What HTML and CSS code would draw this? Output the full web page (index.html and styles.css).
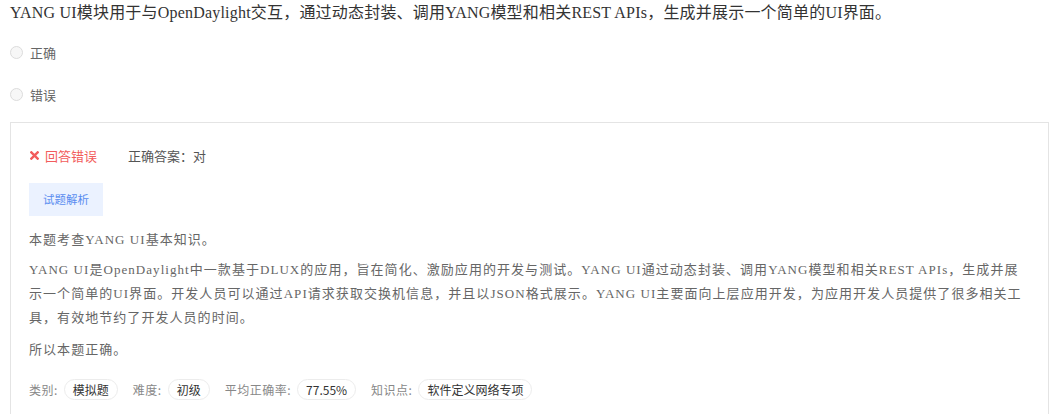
FILE: index.html
```html
<!DOCTYPE html>
<html lang="zh-CN">
<head>
<meta charset="utf-8">
<link rel="stylesheet" href="styles.css">
</head>
<body>
<div class="page">
  <div class="question">YANG UI模块用于与OpenDaylight交互，通过动态封装、调用YANG模型和相关REST APIs，生成并展示一个简单的UI界面。</div>
  <div class="options">
    <label class="option"><span class="radio"></span><span class="opt-text">正确</span></label>
    <label class="option"><span class="radio"></span><span class="opt-text">错误</span></label>
  </div>
  <div class="result-box">
    <div class="result-row">
      <span class="wrong"><svg class="x-icon" viewBox="0 0 10 10" width="9" height="9"><path d="M1.5 1.5 L8.5 8.5 M8.5 1.5 L1.5 8.5" stroke="#f25c5c" stroke-width="2.6" stroke-linecap="square"/></svg>回答错误</span>
      <span class="answer">正确答案：对</span>
    </div>
    <div class="btn-row"><span class="analysis-btn">试题解析</span></div>
    <div class="analysis">
      <p class="a-line">本题考查YANG UI基本知识。</p>
      <p class="a-para">YANG UI是OpenDaylight中一款基于DLUX的应用，旨在简化、激励应用的开发与测试。YANG UI通过动态封装、调用YANG模型和相关REST APIs，生成并展示一个简单的UI界面。开发人员可以通过API请求获取交换机信息，并且以JSON格式展示。YANG UI主要面向上层应用开发，为应用开发人员提供了很多相关工具，有效地节约了开发人员的时间。</p>
      <p class="a-line a-last">所以本题正确。</p>
    </div>
    <div class="tags">
      <span class="tag-group"><span class="tag-label">类别:</span><span class="pill">模拟题</span></span>
      <span class="tag-group"><span class="tag-label">难度:</span><span class="pill">初级</span></span>
      <span class="tag-group"><span class="tag-label">平均正确率:</span><span class="pill">77.55%</span></span>
      <span class="tag-group"><span class="tag-label">知识点:</span><span class="pill">软件定义网络专项</span></span>
    </div>
  </div>
</div>
</body>
</html>
```
FILE: styles.css
```css
html, body {
  margin: 0;
  padding: 0;
  background: #fff;
}
.page {
  padding: 0 1px 0 10px;
  font-family: "Liberation Serif", "Noto Sans CJK SC", serif;
}
.question {
  font-size: 16px;
  line-height: 26px;
  color: #333;
  letter-spacing: 0.2px;
}
.options {
  display: flex;
  flex-direction: column;
  padding-top: 15px;
  gap: 20px;
}
.option {
  display: flex;
  align-items: center;
  height: 22px;
  font-family: "Noto Sans CJK SC", sans-serif;
  font-size: 13px;
  color: #666;
}
.radio {
  width: 11px;
  height: 11px;
  border: 1px solid #dcdcdc;
  border-radius: 50%;
  background: #f7f7f7;
  margin-right: 7px;
}
.result-box {
  margin-top: 17px;
  border: 1px solid #e4e4e4;
  padding: 21px 18px 20px 18px;
  height: 300px;
}
.result-row {
  display: flex;
  align-items: center;
  height: 22px;
  font-family: "Noto Sans CJK SC", sans-serif;
  font-size: 13px;
}
.wrong {
  color: #f25c5c;
  display: flex;
  align-items: center;
  width: 99px;
}
.x-icon {
  margin: 0 6px 0 1px;
}
.answer {
  color: #555;
}
.btn-row {
  display: flex;
  margin-top: 17px;
}
.analysis-btn {
  background: #ebf2ff;
  color: #5a8df0;
  font-family: "Noto Sans CJK SC", sans-serif;
  font-size: 11.5px;
  height: 33px;
  line-height: 33px;
  padding: 0 14px;
}
.analysis {
  margin-top: 12px;
  font-size: 13px;
  color: #666;
  letter-spacing: 1.05px;
  line-height: 24px;
}
.analysis p {
  margin: 0;
}
.analysis .a-para {
  margin-top: 6px;
}
.analysis .a-last {
  margin-top: 8px;
}
.tags {
  display: flex;
  align-items: center;
  gap: 15px;
  margin-top: 17px;
  font-family: "Noto Sans CJK SC", sans-serif;
  font-size: 12px;
}
.tag-group {
  display: flex;
  align-items: center;
  gap: 6px;
}
.tag-label {
  color: #888;
  letter-spacing: 0.5px;
}
.pill {
  border: 1px solid #ececec;
  border-radius: 11px;
  height: 19px;
  line-height: 19px;
  padding: 0 8px;
  color: #333;
}
```
